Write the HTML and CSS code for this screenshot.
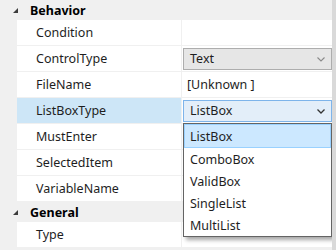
FILE: index.html
```html
<!DOCTYPE html>
<html>
<head>
<meta charset="utf-8">
<link rel="stylesheet" href="styles.css">
</head>
<body>
<div class="grid">
  <div class="cat"><span class="tri"></span><span class="cat-name">Behavior</span></div>
  <div class="row"><div class="name">Condition</div><div class="value"></div></div>
  <div class="row"><div class="name">ControlType</div><div class="value"><div class="combo"><span>Text</span><svg class="chev light" width="8" height="5" viewBox="0 0 8 5"><path d="M0.5 0.5 L4 4 L7.5 0.5" fill="none" stroke="currentColor" stroke-width="1.1"/></svg></div></div></div>
  <div class="row"><div class="name">FileName</div><div class="value"><span class="plain">[Unknown ]</span></div></div>
  <div class="row sel"><div class="name">ListBoxType</div><div class="value"><div class="combo open"><span>ListBox</span><svg class="chev" width="8" height="5" viewBox="0 0 8 5"><path d="M0.5 0.5 L4 4 L7.5 0.5" fill="none" stroke="currentColor" stroke-width="1.3"/></svg></div></div></div>
  <div class="row"><div class="name">MustEnter</div><div class="value"></div></div>
  <div class="row"><div class="name">SelectedItem</div><div class="value"></div></div>
  <div class="row"><div class="name">VariableName</div><div class="value"></div></div>
  <div class="cat"><span class="tri"></span><span class="cat-name">General</span></div>
  <div class="row"><div class="name">Type</div><div class="value"></div></div>

  <div class="popup">
    <div class="item hot">ListBox</div>
    <div class="item">ComboBox</div>
    <div class="item">ValidBox</div>
    <div class="item">SingleList</div>
    <div class="item">MultiList</div>
  </div>
</div>
</body>
</html>
```
FILE: styles.css
```css
html, body {
  margin: 0;
  padding: 0;
  background: #ffffff;
}
.grid {
  position: relative;
  width: 332px;
  height: 250px;
  background: #f0f0f0;
  border-right: 4px solid #d9d9d9;
  font-family: "Noto Sans", "Open Sans", sans-serif;
  font-size: 12.5px;
  color: #1e1e1e;
  overflow: hidden;
}
.cat {
  display: flex;
  align-items: center;
  height: 20px;
  background: #f0f0f0;
}
.tri {
  width: 0;
  height: 0;
  margin-left: 13px;
  margin-right: 12px;
  margin-top: 1px;
  border-left: 5px solid transparent;
  border-bottom: 5px solid #3c3c3c;
}
.cat-name {
  font-weight: bold;
  color: #000;
}
.row {
  display: flex;
  height: 25px;
  margin-left: 17px;
  border-bottom: 1px solid #f0f0f0;
  background: #ffffff;
}
.name {
  width: 165px;
  box-sizing: border-box;
  padding-left: 19px;
  display: flex;
  align-items: center;
  border-right: 1px solid #f0f0f0;
}
.sel .name {
  background: #cde6f7;
}
.value {
  flex: 1;
  display: flex;
  align-items: center;
  padding-left: 1px;
}
.plain {
  padding-left: 4px;
}
.combo {
  flex: 1;
  height: 22px;
  box-sizing: border-box;
  display: flex;
  align-items: center;
  justify-content: space-between;
  padding: 0 6px 0 6px;
  border: 1px solid #adadad;
  background: #e6e6e6;
}
.combo.open {
  border-color: #7eb4ea;
  background: #e3eef9;
}
.chev {
  color: #333;
  margin-top: 1px;
}
.chev.light {
  color: #8a8a8a;
}
.popup {
  position: absolute;
  left: 183px;
  top: 123px;
  width: 149px;
  box-sizing: border-box;
  border: 1px solid #646464;
  background: #ffffff;
  box-shadow: 3px 3px 4px rgba(0, 0, 0, 0.35);
}
.item {
  height: 22px;
  display: flex;
  align-items: center;
  padding-left: 6px;
}
.item.hot {
  height: 24px;
  box-sizing: border-box;
  background: #cce8ff;
  border: 1px solid #99d1ff;
  padding-left: 5px;
}
```
